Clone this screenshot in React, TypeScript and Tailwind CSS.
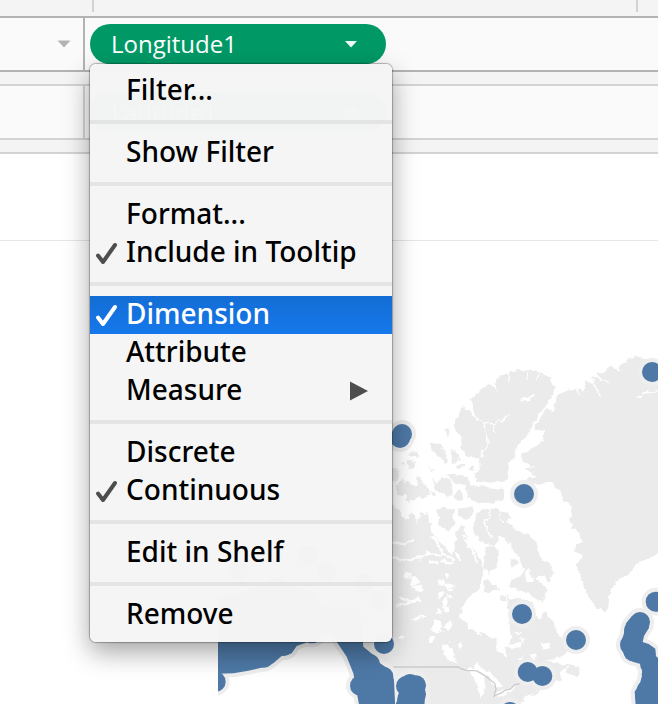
import React from "react";

type MenuEntry = {
  label: string;
  checked?: boolean;
  active?: boolean;
  submenu?: boolean;
};

const groups: MenuEntry[][] = [
  [{ label: "Filter..." }],
  [{ label: "Show Filter" }],
  [{ label: "Format..." }, { label: "Include in Tooltip", checked: true }],
  [
    { label: "Dimension", checked: true, active: true },
    { label: "Attribute" },
    { label: "Measure", submenu: true },
  ],
  [{ label: "Discrete" }, { label: "Continuous", checked: true }],
  [{ label: "Edit in Shelf" }],
  [{ label: "Remove" }],
];

function MenuItem({ label, checked, active, submenu }: MenuEntry) {
  return (
    <button
      type="button"
      role={checked ? "menuitemcheckbox" : "menuitem"}
      aria-checked={checked ? true : undefined}
      aria-haspopup={submenu ? "menu" : undefined}
      className={
        active
          ? "flex h-[38px] w-full items-center bg-linear-to-b from-[#136dd4] to-[#1678ec] text-left text-white"
          : "flex h-[38px] w-full items-center text-left text-black"
      }
    >
      <span className="w-9 shrink-0">
        {checked && (
          <svg viewBox="0 0 36 38" className="h-[38px] w-9" aria-hidden="true">
            <path
              d="M8 21.500 L13 28 L25 11"
              fill="none"
              stroke={active ? "#ffffff" : "#4d4d4d"}
              strokeWidth="4"
              strokeLinecap="round"
              strokeLinejoin="round"
            />
          </svg>
        )}
      </span>
      <span className="grow pb-1 text-[28px] leading-[34px] font-medium whitespace-nowrap">{label}</span>
      {submenu && (
        <svg viewBox="0 0 18 20" className="mr-6 h-5 w-[18px] shrink-0" aria-hidden="true">
          <path d="M0 0.500 L18 10 L0 19.500 Z" fill="#4d4d4d" />
        </svg>
      )}
    </button>
  );
}

function ContextMenu() {
  return (
    <div
      role="menu"
      aria-label="Longitude1"
      className="absolute top-full left-0 z-10 w-[302px] rounded-md bg-[#f5f5f5]/99 py-2 shadow-[0_0_1px_1px_rgba(0,0,0,0.28),0_10px_26px_rgba(0,0,0,0.36)]"
    >
      {groups.map((group, index) => (
        <div key={group[0].label} role="group">
          {index > 0 && <div role="separator" className="my-[10px] h-1 bg-[#e4e4e4]" />}
          {group.map((entry) => (
            <MenuItem key={entry.label} {...entry} />
          ))}
        </div>
      ))}
    </div>
  );
}

function Pill({ label, open }: { label: string; open?: boolean }) {
  return (
    <button
      type="button"
      aria-haspopup="menu"
      aria-expanded={open ? true : false}
      className="flex h-10 w-[296px] items-center justify-between rounded-full bg-[#009966] pr-7 pl-[21px] text-white"
    >
      <span className="font-['Open_Sans',sans-serif] text-2xl leading-8">{label}</span>
      <svg viewBox="0 0 14 8" className="h-2 w-[14px]" aria-hidden="true">
        <path d="M1 1 H13 L7 7.500 Z" fill="#eefaf5" />
      </svg>
    </button>
  );
}

const strokes = (paths: string[], width: number) =>
  paths.map((d) => (
    <path key={d} d={d} fill="none" stroke="#ffffff" strokeWidth={width} strokeLinecap="round" strokeLinejoin="round" />
  ));

const land = [
  // Greenland
  "M840 58 L815 57 780 52 745 57 715 80 720 92 690 78 665 95 650 100 660 118 636 108 646 138 612 120 616 150 594 145 555 150 530 170 522 195 525 212 500 205 480 235 465 265 492 275 490 305 460 325 425 345 432 365 465 382 435 385 450 400 470 408 445 412 437 422 470 435 510 428 545 450 550 480 572 500 572 540 578 565 600 582 608 608 582 615 590 640 608 645 590 675 600 705 612 745 635 790 672 820 685 800 690 760 710 720 745 705 780 665 840 640 Z",
  // Ellesmere
  "M268 180 L320 135 345 142 350 110 400 95 440 88 490 100 528 140 515 175 480 215 455 260 440 290 415 315 404 340 385 390 380 420 340 428 290 425 280 404 300 388 296 355 265 355 240 320 245 290 225 270 225 240 250 198 265 208 275 225 292 232 Z",
  // Arctic islands
  "M150 305 L175 308 196 335 204 368 175 352 150 326 Z",
  "M208 330 L236 342 240 362 216 368 Z M192 268 L206 266 204 286 Z",
  "M82 350 L105 332 118 346 Z M80 364 L112 360 106 388 84 384 Z M66 366 l10 4 -4 8 z",
  "M146 372 l8 16 4 10 -8 -6 z M224 374 L252 372 252 382 228 384 Z M270 378 l12 0 2 12 -12 -2 z",
  "M28 382 L54 388 58 412 42 430 28 410 Z",
  "M46 440 L66 420 88 428 112 436 112 408 122 410 124 432 148 444 148 464 120 472 88 488 72 484 86 468 48 462 Z",
  "M156 410 L170 428 186 414 212 420 218 462 196 468 166 446 Z M154 456 l10 0 2 12 -10 0 z",
  "M196 402 L222 404 262 412 270 436 370 446 368 484 290 490 262 470 256 434 226 428 Z M226 460 l14 -12 12 32 -22 2 z",
  "M172 512 L190 504 220 506 224 550 204 580 178 556 Z",
  "M234 506 L276 500 278 524 258 540 234 528 Z M248 556 L262 600 264 640 226 616 226 570 Z",
  // Baffin
  "M290 515 L315 508 355 510 385 515 398 535 375 542 420 575 450 585 475 615 470 635 495 665 525 690 508 725 480 705 468 720 495 740 500 775 485 785 440 755 400 742 385 735 390 720 420 715 432 680 412 645 385 610 365 592 345 615 300 605 280 575 Z",
  "M318 620 L345 618 355 645 345 685 325 700 310 680 Z M390 660 l18 -6 8 18 -14 10 -14 -4 z",
  "M316 718 L340 735 360 750 330 755 310 758 Z M362 765 l20 4 -6 14 -16 -6 z",
  // Mainland
  "M-70 470 L40 495 62 514 74 542 98 520 112 548 122 515 148 522 150 565 172 600 196 620 212 650 232 600 262 630 276 620 300 650 304 665 312 690 308 715 300 740 280 760 256 785 242 810 240 836 256 848 262 862 300 880 345 896 350 930 372 946 384 910 392 890 388 850 396 828 382 800 384 774 440 780 462 796 466 836 480 838 496 812 520 850 540 890 560 892 570 930 538 956 490 962 540 972 598 980 598 1012 560 1000 570 970 540 1000 545 1020 500 1044 440 1070 410 1100 -60 1100 -50 990 -130 900 Z",
];

const water = [
  "M20 605 L70 612 100 600 M20 640 L60 660 120 655 140 640 200 650 225 660 M160 590 L190 640",
  "M245 820 L262 800",
  "M250 590 L275 625 290 665 M230 640 L240 660 M215 600 L205 630",
  "M50 800 L90 785 120 778 M92 838 L136 830 M60 770 L84 780 M150 668 L172 664 M186 664 L222 668",
];

const lakes = [
  "M78 696 l12 6 -4 14 -10 -6 z M92 715 l20 2 4 10 -20 6 z M96 742 l20 -6 18 10 -22 10 z",
  "M196 700 l8 6 -10 6 z M178 720 l12 4 -2 12 -14 -2 z M206 744 l16 4 -14 2 z M196 770 l6 20 -8 10 z M176 808 l6 2 -4 8 z",
  "M164 838 l16 12 4 20 -12 10 -14 -16 z M196 856 l14 -12 6 8 -14 14 z M148 896 l10 -4 2 8 -8 4 z M56 892 l16 0 -2 4 z",
  "M194 732 l22 2 2 6 -22 0 z M176 758 l12 -6 2 16 -12 6 z M206 764 l8 0 2 12 -8 0 z M172 806 l8 0 0 14 -8 0 z M196 804 l8 -2 2 12 -10 2 z",
  "M186 918 L206 914 224 948 226 970 212 964 192 936 Z M236 912 l12 0 0 10 -10 2 z",
  "M382 914 L424 908 420 920 386 924 Z M410 878 l10 2 -6 6 z M424 896 l8 0 -2 8 z M486 910 l22 2 -2 12 -16 2 z M456 942 l12 4 -4 12 -8 -4 z M416 956 l12 -8 0 16 z",
  "M352 880 L372 900 376 944 364 936 350 910 Z",
  "M262 990 L288 980 294 966 300 984 330 1000 352 1024 362 1040 346 1040 324 1010 308 1010 316 1040 302 1072 296 1030 270 1000 Z",
  "M340 1068 L370 1052 402 1040 396 1050 354 1070 Z M356 592 l16 4 -6 8 z",
  "M436 690 l10 0 4 14 10 8 -6 16 -14 -6 z",
];

const dots: [number, number][] = [
  [816, 96], [66, 282], [60, 294], [432, 462], [426, 822], [588, 900],
  [443, 996], [487, 1008], [390, 1116], [827, 785], [12, 912],
  [-425, 690], [-215, 645], [-160, 695], [-50, 730], [-5, 780], [-310, 740],
  [780, 846], [762, 872], [750, 914], [760, 934], [797, 944], [810, 972],
  [815, 1004], [800, 1050], [796, 1072], [834, 1040],
  [-60, 1037], [-30, 972], [10, 1010], [12, 1026], [78, 1038], [90, 1032], [108, 1036], [108, 1062], [82, 1075],
  [-493, 1025], [-348, 953], [-288, 918], [-204, 880],
];

const tracks = [
  "M-500 780 L-300 720 -190 760 -150 880 -200 900 -250 918 -265 940 -295 948 -320 970 -350 982 -395 992 -440 1000 -500 1002 Z",
  "M-210 800 L-60 800 -50 920 -20 945 0 970 30 990 42 1020 46 1110 -60 1110 -80 1000 -100 950 -130 905 Z",
  "M60 1060 L136 1060 132 1110 40 1110 Z",
  "M756 828 L738 850 732 880 724 905 726 930 738 955 760 966 782 972 788 1000 780 1030 764 1055 768 1110 850 1110 850 980 828 960 826 926 806 912 788 906 792 888 808 862 Z",
];

function WorldMap() {
  return (
    <svg viewBox="-486 -297 1320 1389" className="block w-full" role="img" aria-label="Map of plotted locations">
      <defs>
        <filter id="coast" x="-5%" y="-5%" width="110%" height="110%">
          <feTurbulence type="fractalNoise" baseFrequency="0.05" numOctaves="3" seed="4" result="noise" />
          <feDisplacementMap in="SourceGraphic" in2="noise" scale="20" xChannelSelector="R" yChannelSelector="G" />
        </filter>
      </defs>
      <g filter="url(#coast)">
        {land.map((d) => (
          <path key={d} d={d} fill="#ebebeb" />
        ))}
        {lakes.map((d) => (
          <path key={d} d={d} fill="#ffffff" stroke="#ffffff" strokeWidth="4" />
        ))}
        {strokes(water, 7)}
        {strokes(
          [
            "M262 195 L275 225 310 248 340 252 370 238 385 225 M310 255 L320 290 322 325 300 345 M340 255 L350 282",
            "M770 175 L800 158 840 152 M648 110 L682 128 M636 125 L662 168 M590 140 L596 172",
            "M340 112 L352 150 M385 98 L390 120 M445 95 L440 118 M480 100 L466 120",
            "M330 512 L316 545 322 575 340 590 M358 512 L368 545",
          ],
          4,
        )}
        <path d="M425 184 L460 168" stroke="#ffffff" strokeWidth="8" strokeLinecap="round" />
      </g>
      <path
        d="M-40 981 H236 L242 986 262 992 288 992 304 1000 324 1014 344 1030 348 1048 342 1068 366 1058 376 1050 390 1048 404 1034 424 1030"
        fill="none"
        stroke="#cccccc"
        strokeWidth="4"
      />
      <g fill="#eeeeee" stroke="#eeeeee" strokeWidth="24" strokeLinejoin="round">
        {tracks.map((d) => (
          <path key={d} d={d} />
        ))}
        {dots.map(([x, y], i) => (
          <circle key={i} cx={x} cy={y} r="30" />
        ))}
      </g>
      <g fill="#4e79a7">
        {tracks.map((d) => (
          <path key={d} d={d} />
        ))}
        {dots.map(([x, y], i) => (
          <circle key={i} cx={x} cy={y} r="30" />
        ))}
      </g>
    </svg>
  );
}

export default function App() {
  return (
    <main className="min-h-screen w-full overflow-hidden bg-white font-['Noto_Sans',sans-serif]">
      <header className="flex h-4 justify-between bg-[#f4f4f4] pr-5 pl-[92px]">
        <div className="h-3 w-[2px] bg-[#d3d3d3]" />
        <div className="h-3 w-[2px] bg-[#d3d3d3]" />
      </header>

      <section className="flex h-14 border-y-2 border-[#b3b3b3] bg-[#fafafa]">
        <div className="flex w-[85px] items-center justify-end border-r-2 border-[#b3b3b3] pr-3">
          <button type="button" aria-label="Columns shelf options" className="block">
            <svg viewBox="0 0 14 8" className="h-2 w-[14px]" aria-hidden="true">
              <path d="M0.500 0.500 H13.500 L7 7.500 Z" fill="#b3b3b3" />
            </svg>
          </button>
        </div>
        <div className="grow pt-[6px] pl-[5px]">
          <div className="relative w-[296px]">
            <Pill label="Longitude1" open />
            <ContextMenu />
          </div>
        </div>
      </section>

      <div className="h-3 bg-[#f4f4f4]" />

      <section className="flex h-14 border-y-2 border-[#d3d3d3] bg-[#fafafa]">
        <div className="w-[85px] border-r-2 border-[#d3d3d3]" />
        <div className="grow pt-[6px] pl-[5px]">
          <Pill label="Latitude1" />
        </div>
      </section>

      <div className="h-[14px] border-b-2 border-[#d3d3d3] bg-[#f4f4f4]" />
      <div className="h-[87px] border-b border-[#e6e6e6]" />

      <section className="pl-[33.130%]">
        <WorldMap />
      </section>
    </main>
  );
}
